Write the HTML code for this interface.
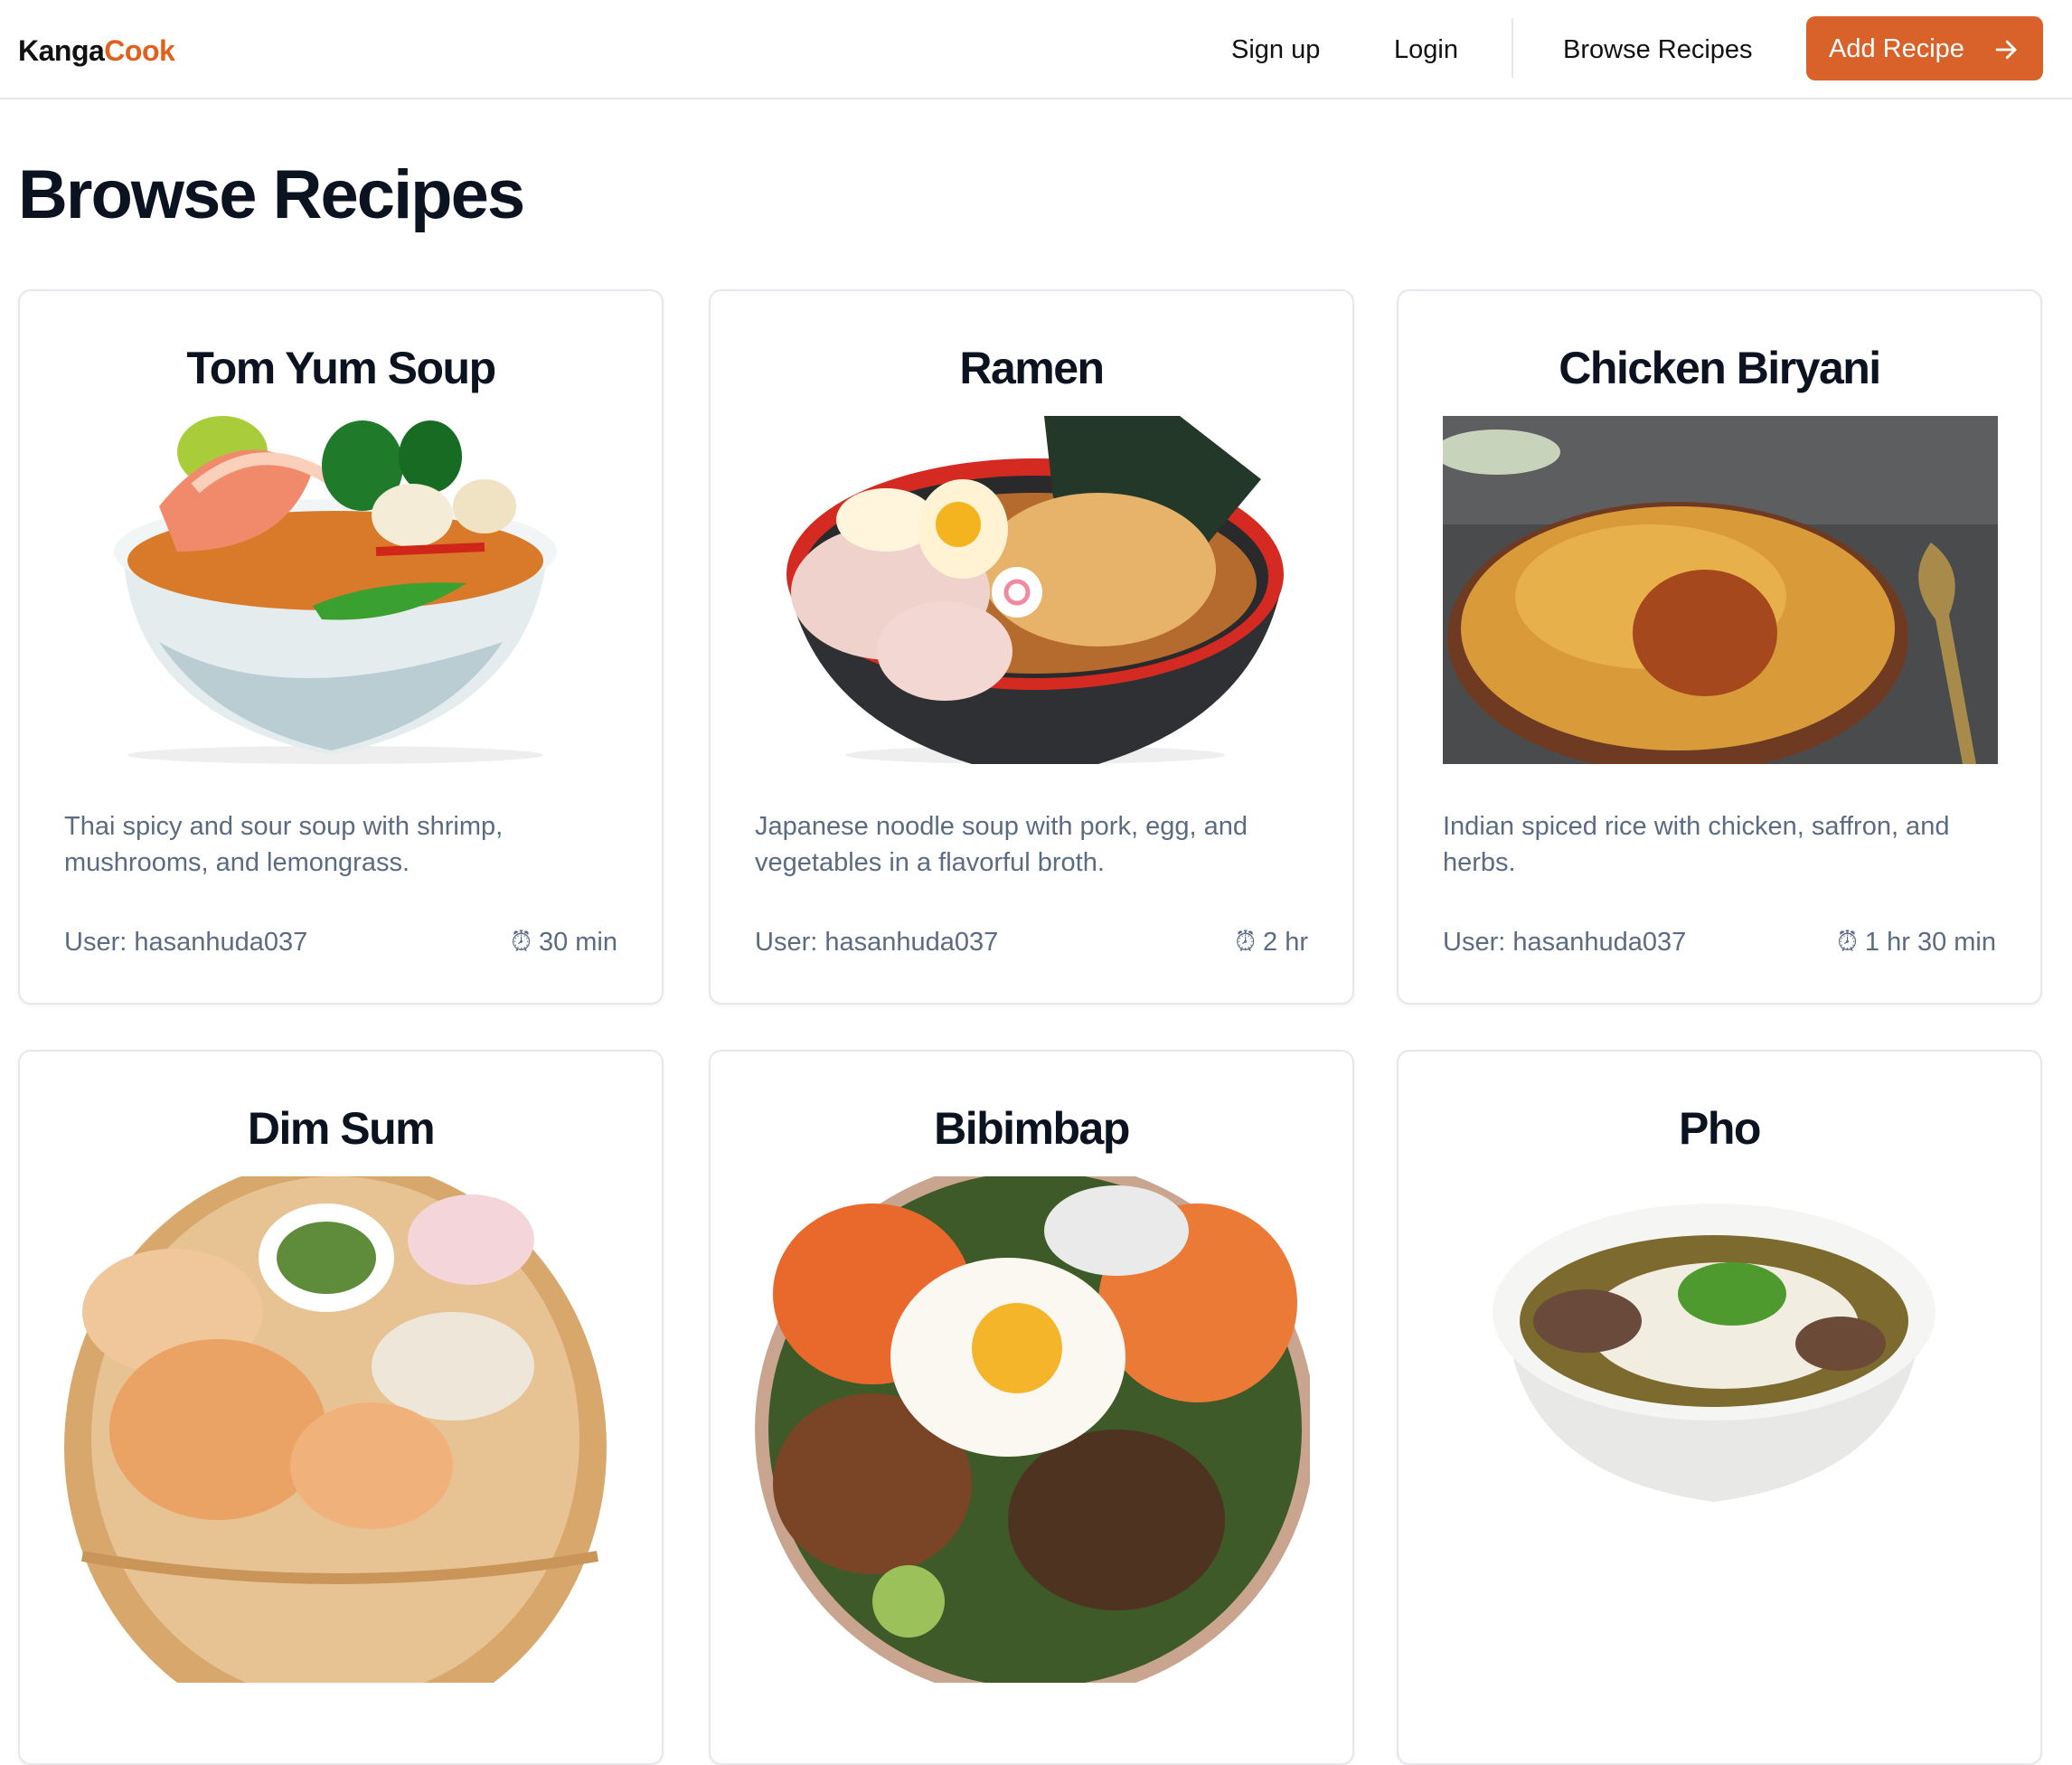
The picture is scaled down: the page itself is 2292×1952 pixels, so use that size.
<!DOCTYPE html>
<html><head><meta charset="utf-8"><style>
*{box-sizing:border-box;margin:0;padding:0}
body{width:2292px;height:1672px;overflow:hidden;background:#fff;font-family:"Liberation Sans",Arial,sans-serif;color:#0f172a;position:relative}
.nav{position:absolute;left:0;top:0;width:2292px;height:110px;border-bottom:2px solid #e5e7eb}
.logo{position:absolute;left:20px;top:38px;font-size:32px;font-weight:bold;letter-spacing:-0.5px;color:#111}
.logo span{color:#e0601f}
.nl{position:absolute;top:39px;font-size:29px;color:#111}
.div{position:absolute;left:1672px;top:20px;width:2px;height:66px;background:#e5e7eb}
.btn{position:absolute;left:1998px;top:18px;width:262px;height:71px;background:#d9622b;border-radius:10px;color:#fff;font-size:29px;padding:20px 0 0 25px}
.btn svg{position:absolute;right:26px;top:22px}
h1{position:absolute;left:20px;top:172px;font-size:76px;font-weight:bold;letter-spacing:-2px;color:#0b1220}
.card{position:absolute;width:714px;height:791px;border:2px solid #e5e7eb;border-radius:14px;box-shadow:0 2px 4px rgba(0,0,0,.05);overflow:hidden;background:#fff}
.card h2{position:absolute;left:0;right:0;top:56px;text-align:center;font-size:50px;font-weight:bold;letter-spacing:-1.5px;color:#0b1220}
.card svg.im{position:absolute;left:49px;top:138px;width:614px;height:385px}
.card svg.im2{position:absolute;left:49px;top:138px;width:614px;height:560px}
.desc{position:absolute;left:49px;right:49px;top:572px;font-size:29px;line-height:40px;color:#5b6b82}
.meta{position:absolute;left:49px;right:49px;top:704px;font-size:29px;color:#5b6b82;display:flex;justify-content:space-between}
</style></head><body>
<div class="nav">
<div class="logo">Kanga<span>Cook</span></div>
<div class="nl" style="left:1362px">Sign up</div>
<div class="nl" style="left:1542px">Login</div>
<div class="div"></div>
<div class="nl" style="left:1729px">Browse Recipes</div>
<div class="btn">Add Recipe<svg width="30" height="30" viewBox="0 0 24 24" fill="none" stroke="#fff" stroke-width="2.2" stroke-linecap="round"><path d="M4 12h16M13 5l7 7-7 7"/></svg></div>
</div>
<h1>Browse Recipes</h1>

<div class="card" style="left:20px;top:320px">
<h2>Tom Yum Soup</h2>
<svg class="im" viewBox="0 0 614 385"><ellipse cx="300" cy="375" rx="230" ry="10" fill="#eee"/><path d="M65 150 Q75 330 295 375 Q515 330 535 150Z" fill="#e4ecee"/><path d="M105 250 Q245 330 485 250 Q425 340 295 370 Q165 340 105 250Z" fill="#b9cdd2"/><ellipse cx="300" cy="150" rx="245" ry="58" fill="#f1f5f6"/><ellipse cx="300" cy="160" rx="230" ry="55" fill="#d97a2a"/><ellipse cx="175" cy="40" rx="50" ry="40" fill="#a9cc3b"/><path d="M105 100 Q185 0 275 60 Q245 150 125 150Z" fill="#f08a6a"/><path d="M145 80 Q215 20 295 70" stroke="#fbd0bb" stroke-width="14" fill="none"/><ellipse cx="330" cy="55" rx="45" ry="50" fill="#1f7a2a"/><ellipse cx="405" cy="45" rx="35" ry="40" fill="#186b23"/><ellipse cx="385" cy="110" rx="45" ry="35" fill="#f4ecd6"/><ellipse cx="465" cy="100" rx="35" ry="30" fill="#efe3c4"/><path d="M275 210 Q345 180 445 185 Q375 230 285 225Z" fill="#3aa02f"/><path d="M345 150 L465 145" stroke="#d0261a" stroke-width="10"/></svg>
<div class="desc">Thai spicy and sour soup with shrimp, mushrooms, and lemongrass.</div>
<div class="meta"><span>User: hasanhuda037</span><span>⏰︎ 30 min</span></div>
</div>

<div class="card" style="left:784px;top:320px">
<h2>Ramen</h2>
<svg class="im" viewBox="0 0 614 385"><ellipse cx="310" cy="375" rx="210" ry="10" fill="#eee"/><path d="M35 175 Q60 330 240 385 L380 385 Q560 330 585 175Z" fill="#2f3033"/><ellipse cx="310" cy="175" rx="275" ry="128" fill="#d42a22"/><ellipse cx="310" cy="178" rx="258" ry="112" fill="#2a2a2c"/><ellipse cx="310" cy="185" rx="245" ry="100" fill="#b56a2e"/><path d="M320 0 L470 0 L560 70 L460 190 L330 90Z" fill="#24382a"/><ellipse cx="380" cy="170" rx="130" ry="85" fill="#e7b36a"/><ellipse cx="150" cy="195" rx="110" ry="75" fill="#efd2cc"/><ellipse cx="210" cy="260" rx="75" ry="55" fill="#f2d7d2"/><ellipse cx="145" cy="115" rx="55" ry="35" fill="#fff5dc"/><ellipse cx="230" cy="125" rx="50" ry="55" fill="#fff3d4"/><circle cx="225" cy="120" r="25" fill="#f3b420"/><circle cx="290" cy="195" r="28" fill="#fff"/><circle cx="290" cy="195" r="12" fill="none" stroke="#f08aa0" stroke-width="5"/></svg>
<div class="desc">Japanese noodle soup with pork, egg, and vegetables in a flavorful broth.</div>
<div class="meta"><span>User: hasanhuda037</span><span>⏰︎ 2 hr</span></div>
</div>

<div class="card" style="left:1545px;top:320px">
<h2>Chicken Biryani</h2>
<svg class="im" viewBox="0 0 614 385"><rect width="614" height="385" fill="#4a4b4d"/><rect width="614" height="120" fill="#5c5e5f"/><ellipse cx="60" cy="40" rx="70" ry="25" fill="#c8d3bc"/><ellipse cx="260" cy="245" rx="255" ry="150" fill="#6e3b22"/><ellipse cx="260" cy="235" rx="240" ry="135" fill="#d99a3a"/><ellipse cx="230" cy="200" rx="150" ry="80" fill="#e7b04a"/><ellipse cx="290" cy="240" rx="80" ry="70" fill="#a6481d"/><path d="M540 140 Q580 170 560 220 L590 385 L575 385 L545 225 Q510 180 540 140Z" fill="#a88a4b"/></svg>
<div class="desc">Indian spiced rice with chicken, saffron, and herbs.</div>
<div class="meta"><span>User: hasanhuda037</span><span>⏰︎ 1 hr 30 min</span></div>
</div>

<div class="card" style="left:20px;top:1161px">
<h2>Dim Sum</h2>
<svg class="im2" viewBox="0 0 614 560"><ellipse cx="300" cy="300" rx="300" ry="320" fill="#d8a76c"/><ellipse cx="300" cy="290" rx="270" ry="290" fill="#e7c394"/><ellipse cx="120" cy="150" rx="100" ry="70" fill="#f0c79a"/><ellipse cx="290" cy="90" rx="75" ry="60" fill="#fff"/><ellipse cx="290" cy="90" rx="55" ry="40" fill="#5f8c3a"/><ellipse cx="450" cy="70" rx="70" ry="50" fill="#f4d5da"/><ellipse cx="170" cy="280" rx="120" ry="100" fill="#eaa365"/><ellipse cx="430" cy="210" rx="90" ry="60" fill="#eee6d8"/><ellipse cx="340" cy="320" rx="90" ry="70" fill="#f0b27a"/><path d="M20 420 Q300 470 590 420" stroke="#c99558" stroke-width="12" fill="none"/></svg>
</div>

<div class="card" style="left:784px;top:1161px">
<h2>Bibimbap</h2>
<svg class="im2" viewBox="0 0 614 560"><ellipse cx="310" cy="280" rx="310" ry="300" fill="#c9a48e"/><ellipse cx="310" cy="280" rx="295" ry="285" fill="#3e5a28"/><ellipse cx="130" cy="130" rx="110" ry="100" fill="#e8692b"/><ellipse cx="490" cy="140" rx="110" ry="110" fill="#eb7a36"/><ellipse cx="400" cy="60" rx="80" ry="50" fill="#eaeaea"/><ellipse cx="130" cy="340" rx="110" ry="100" fill="#7a4426"/><ellipse cx="400" cy="380" rx="120" ry="100" fill="#4f3321"/><ellipse cx="280" cy="200" rx="130" ry="110" fill="#fbf8f2"/><circle cx="290" cy="190" r="50" fill="#f5b52a"/><circle cx="170" cy="470" r="40" fill="#9bc25a"/></svg>
</div>

<div class="card" style="left:1545px;top:1161px">
<h2>Pho</h2>
<svg class="im2" viewBox="0 0 614 560"><path d="M70 150 Q80 330 300 360 Q520 330 530 150Z" fill="#e8e8e6"/><ellipse cx="300" cy="150" rx="245" ry="120" fill="#f5f5f3"/><ellipse cx="300" cy="160" rx="215" ry="95" fill="#7d6a2e"/><ellipse cx="310" cy="165" rx="150" ry="70" fill="#f1ede1"/><ellipse cx="320" cy="130" rx="60" ry="35" fill="#4f9a2f"/><ellipse cx="160" cy="160" rx="60" ry="35" fill="#6a4a3a"/><ellipse cx="440" cy="185" rx="50" ry="30" fill="#6b4a38"/></svg>
</div>
</body></html>
